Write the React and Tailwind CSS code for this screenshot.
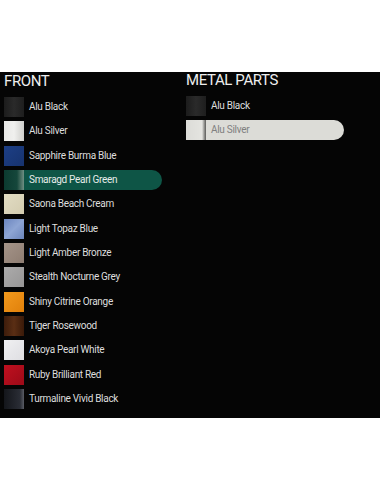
import React from 'react';

const front = [
  { name: 'Alu Black', sw: 'bg-linear-to-r from-[#1c1c1c] via-[#2a2a2a] to-[#1e1e1e]' },
  { name: 'Alu Silver', sw: 'bg-linear-to-r from-[#e8e8e6] via-[#f0f0ee] to-[#cfcfcc]' },
  { name: 'Sapphire Burma Blue', sw: 'bg-linear-to-br from-[#1d3f86] to-[#17336e]' },
  { name: 'Smaragd Pearl Green', sw: 'bg-linear-to-r from-[#0c3a30] via-[#15473b] via-65% to-[#6f9084]', active: 'green' },
  { name: 'Saona Beach Cream', sw: 'bg-linear-to-br from-[#e2dcc3] to-[#d3ccb0]' },
  { name: 'Light Topaz Blue', sw: 'bg-linear-to-br from-[#6c86bf] via-[#8ea5d4] to-[#6c85bb]' },
  { name: 'Light Amber Bronze', sw: 'bg-linear-to-br from-[#a59488] to-[#8e7d72]' },
  { name: 'Stealth Nocturne Grey', sw: 'bg-linear-to-br from-[#acabab] to-[#979696]' },
  { name: 'Shiny Citrine Orange', sw: 'bg-linear-to-br from-[#f39a1c] to-[#e0800a]' },
  { name: 'Tiger Rosewood', sw: 'bg-linear-to-r from-[#3d1c0b] via-[#5a2e14] to-[#3a1a09]' },
  { name: 'Akoya Pearl White', sw: 'bg-linear-to-br from-[#f0f0f2] to-[#dedee2]' },
  { name: 'Ruby Brilliant Red', sw: 'bg-linear-to-br from-[#c0101f] to-[#9d0a18]' },
  { name: 'Turmaline Vivid Black', sw: 'bg-linear-to-r from-[#14161b] via-[#2a2d35] via-80% to-[#5a5d66]' },
];

const metal = [
  { name: 'Alu Black', sw: 'bg-linear-to-r from-[#1c1c1c] via-[#2a2a2a] to-[#1e1e1e]' },
  { name: 'Alu Silver', sw: 'bg-linear-to-r from-[#dcdcd8] via-[#e4e4e0] via-80% to-[#5a5a58]', active: 'silver' },
];

const Row = ({ item }) => {
  const pill =
    item.active === 'green'
      ? 'bg-[#0e5546] rounded-r-full w-[158px] text-[#e6ece9]'
      : item.active === 'silver'
      ? 'bg-[#dcdcd7] rounded-r-full w-[158px] text-[#808080]'
      : 'text-[#dedede]';
  return (
    <div className={`flex items-center h-5 ${pill}`}>
      <div className={`w-5 h-5 shrink-0 ${item.sw}`} />
      <span className="ml-[5px] text-[10px] leading-none tracking-[-0.3px] whitespace-nowrap">{item.name}</span>
    </div>
  );
};

export default function App() {
  return (
    <div className="w-[381px] h-[492px] bg-white" style={{ fontFamily: 'Roboto, "Liberation Sans", sans-serif' }}>
      <div className="h-[72px]" />
      <div className="w-[380px] h-[346px] bg-[#050505] flex">
        <div className="w-[186px] pl-1">
          <h2 className="text-[15px] leading-[18px] text-[#eeeeee] tracking-[-0.4px]">FRONT</h2>
          <div className="mt-[7px] flex flex-col gap-[4.33px]">
            {front.map((it) => (
              <Row key={it.name} item={it} />
            ))}
          </div>
        </div>
        <div className="flex-1">
          <h2 className="text-[15px] leading-[18px] text-[#eeeeee] tracking-[-0.4px] -mt-[1px]">METAL PARTS</h2>
          <div className="mt-[7px] flex flex-col gap-[4.33px]">
            {metal.map((it) => (
              <Row key={it.name} item={it} />
            ))}
          </div>
        </div>
      </div>
    </div>
  );
}
